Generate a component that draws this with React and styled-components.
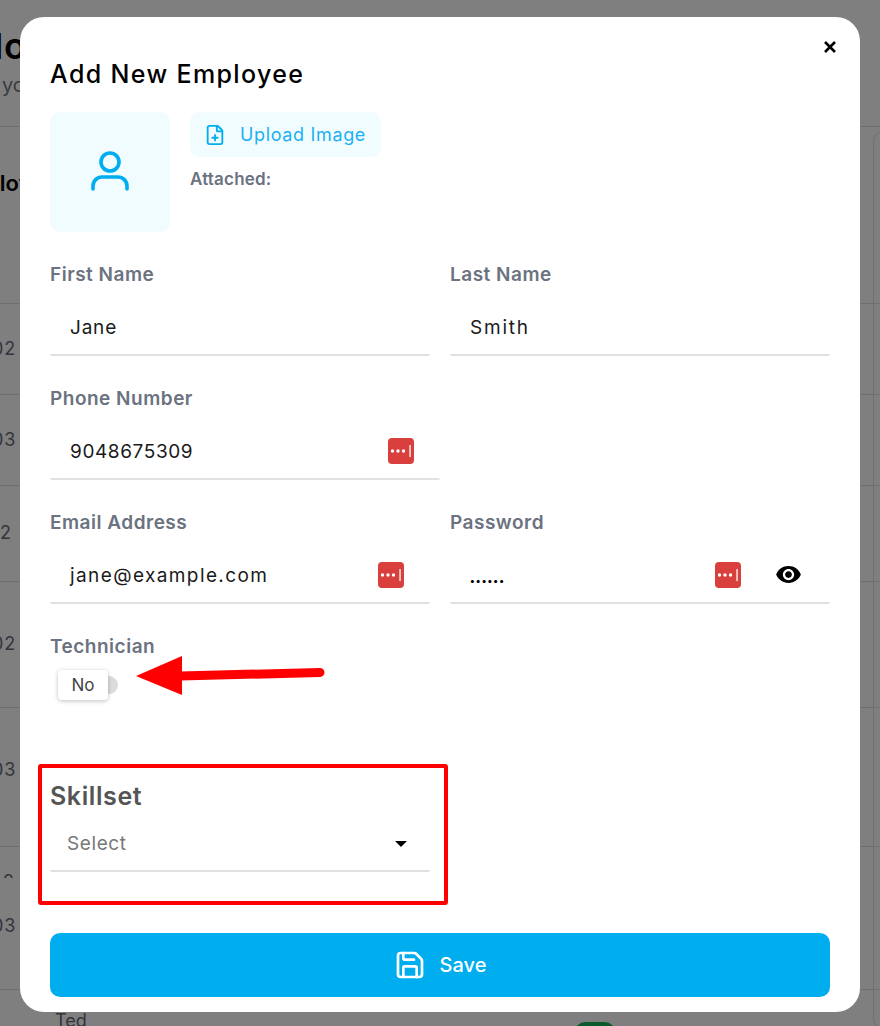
import React from "react";
import styled, { createGlobalStyle } from "styled-components";
import { MdVisibility } from "react-icons/md";
import { FilePlus, Save } from "lucide-react";

const Global = createGlobalStyle`
  html, body { margin: 0; padding: 0; background: #7f7f7f; }
  * { box-sizing: border-box; }
  body { font-family: Inter, "Liberation Sans", sans-serif; }
`;

const Backdrop = styled.div`
  position: fixed;
  inset: 0;
  background: #7f7f7f;
  overflow: hidden;
  color: #33343c;
`;
const PageHead = styled.header`
  height: 127px;
  margin-left: -86px;
  padding-top: 24px;
  border-bottom: 1px solid #6f6f6f;
`;
const PageTitle = styled.div`
  font-size: 36px;
  font-weight: 600;
  line-height: 44px;
  color: #000;
  letter-spacing: 1px;
`;
const PageSub = styled.div`
  font-size: 20px;
  line-height: 24px;
  margin-top: 5px;
  margin-left: 6px;
  color: #3a3b42;
`;
const SectionTitle = styled.div`
  height: 176px;
  padding-top: 42px;
  margin-left: -47px;
  font-size: 22px;
  font-weight: 600;
  line-height: 28px;
  color: #000;
`;
const Row = styled.div`
  height: ${(p) => p.$h}px;
  border-top: 1px solid #6f6f6f;
  padding-top: ${(p) => p.$top}px;
  padding-left: ${(p) => p.$left ?? 0}px;
  font-size: 18px;
  line-height: 24px;
  color: #33343c;
`;
const RowNum = styled.span`
  display: block;
  margin-left: ${(p) => p.$x ?? -8}px;
  letter-spacing: 1px;
`;
const RowClip = styled.div`
  height: 4px;
  overflow: hidden;
  margin-bottom: 36px;
  margin-left: 3px;
  & > span {
    display: block;
    margin-top: -4px;
  }
`;
const RightPanel = styled.div`
  position: absolute;
  left: 873px;
  top: 130px;
  width: 60px;
  height: 900px;
  border: 1px solid #6f6f6f;
  border-radius: 12px;
`;
const GreenBadge = styled.div`
  position: absolute;
  left: 575px;
  top: 1022px;
  width: 40px;
  height: 24px;
  border-radius: 10px;
  background: #0c5a2c;
`;

const Modal = styled.section`
  position: fixed;
  left: 20px;
  top: 17px;
  width: 840px;
  height: 995px;
  background: #fff;
  border-radius: 24px;
  padding: 40px 30px 0;
`;
const Close = styled.button`
  position: absolute;
  right: 22px;
  top: 22px;
  width: 16px;
  height: 16px;
  padding: 0;
  border: 0;
  background: none;
  display: block;
`;
const Title = styled.h2`
  margin: 0;
  height: 34px;
  font-size: 25px;
  font-weight: 500;
  line-height: 34px;
  letter-spacing: 1.35px;
  color: #000;
`;
const UploadRow = styled.div`
  display: flex;
  gap: 20px;
  margin-top: 21px;
  height: 120px;
`;
const Avatar = styled.div`
  width: 120px;
  height: 120px;
  background: #f1fcff;
  border-radius: 10px;
  display: flex;
  align-items: center;
  justify-content: center;
`;
const UploadCol = styled.div`
  display: flex;
  flex-direction: column;
  align-items: flex-start;
`;
const UploadBtn = styled.button`
  width: 191px;
  height: 45px;
  border: 0;
  border-radius: 10px;
  background: #f1fcff;
  color: #1eb0f0;
  display: flex;
  align-items: center;
  padding: 0 0 0 14px;
  gap: 14px;
  font: 400 18px Inter, sans-serif;
  letter-spacing: 0.65px;
`;
const Attached = styled.div`
  margin-top: 12px;
  font-size: 17px;
  line-height: 20px;
  font-weight: 600;
  letter-spacing: 0.2px;
  color: #6b7280;
`;
const Grid = styled.div`
  display: grid;
  grid-template-columns: 380px 380px;
  column-gap: 20px;
  margin-top: ${(p) => p.$mt}px;
`;
const Field = styled.div`
  height: 124px;
  width: ${(p) => p.$w ?? 380}px;
`;
const Label = styled.div`
  font-size: 19px;
  font-weight: 600;
  line-height: 24px;
  color: #6b7280;
  letter-spacing: 0.5px;
`;
const InputWrap = styled.div`
  position: relative;
  margin-top: 9px;
  height: 60px;
  border-bottom: 2px solid #e2e2e2;
  border-radius: 2px;
  padding: 0 0 14px 20px;
  display: flex;
  align-items: flex-end;
  font-size: 19px;
  line-height: 24px;
  color: #1a1a1a;
  letter-spacing: ${(p) => p.$ls ?? 0.8}px;
`;
const Dots = styled.span`
  font-size: 10px;
  letter-spacing: 1.1px;
  color: #000;
  font-weight: 700;
  line-height: 1;
  margin-bottom: 3px;
`;
const KeyIcon = styled.span`
  position: absolute;
  right: ${(p) => p.$r}px;
  top: 18px;
  width: 26px;
  height: 26px;
  display: block;
`;
const EyeIcon = styled(MdVisibility)`
  position: absolute;
  right: 28px;
  top: 17px;
  color: #000;
`;
const TechBlock = styled.div`
  height: 129px;
`;
const Toggle = styled.div`
  position: relative;
  margin: 11px 0 0 8px;
  width: 60px;
  height: 30px;
`;
const Track = styled.div`
  position: absolute;
  left: 40px;
  top: 6px;
  width: 20px;
  height: 18px;
  border-radius: 9px;
  background: #dcdcdc;
`;
const Knob = styled.div`
  position: absolute;
  left: 0;
  top: 0;
  width: 50px;
  height: 30px;
  background: #fff;
  border-radius: 4px;
  box-shadow: 0 1px 4px rgba(0,0,0,.25);
  display: flex;
  align-items: center;
  justify-content: center;
  font-size: 17px;
  color: #444;
`;
const Highlight = styled.div`
  margin-left: -12px;
  width: 410px;
  height: 141px;
  border: 4px solid #fe0000;
  border-radius: 3px;
  padding: 13px 14px 0 8px;
`;
const SkillTitle = styled.div`
  font-size: 25px;
  font-weight: 600;
  line-height: 30px;
  color: #555;
  letter-spacing: 0.6px;
`;
const SelectBox = styled.div`
  margin-top: 4px;
  height: 57px;
  border-bottom: 2px solid #e0e0e0;
  border-radius: 2px;
  padding: 0 23px 14px 17px;
  display: flex;
  align-items: flex-end;
  justify-content: space-between;
  font-size: 19px;
  line-height: 24px;
  color: #777;
  letter-spacing: 0.6px;
`;
const Caret = styled.span`
  width: 0;
  height: 0;
  margin-bottom: 9px;
  border-left: 6px solid transparent;
  border-right: 6px solid transparent;
  border-top: 6px solid #000;
`;
const SaveBtn = styled.button`
  margin-top: 28px;
  width: 780px;
  height: 64px;
  border: 0;
  border-radius: 10px;
  background: #00aeef;
  color: #fff;
  display: flex;
  align-items: center;
  justify-content: center;
  gap: 14px;
  font: 500 20px Inter, sans-serif;
`;
const Arrow = styled.svg`
  position: absolute;
  left: 116px;
  top: 639px;
`;

const LastPass = () => (
  <svg width="26" height="26" viewBox="0 0 26 26">
    <rect width="26" height="26" rx="4" fill="#d93f3c" />
    <circle cx="4.5" cy="13" r="1.7" fill="#fff" />
    <circle cx="10" cy="13" r="1.7" fill="#fff" />
    <circle cx="15.5" cy="13" r="1.7" fill="#fff" />
    <rect x="21.4" y="7" width="1.3" height="12" fill="#fff" />
  </svg>
);

export default function App() {
  return (
    <>
      <Global />
      <Backdrop>
        <PageHead>
          <PageTitle>Employees</PageTitle>
          <PageSub>Manage your</PageSub>
        </PageHead>
        <SectionTitle>Employees</SectionTitle>
        <Row $h={91} $top={33}><RowNum>02</RowNum></Row>
        <Row $h={91} $top={33}><RowNum>03</RowNum></Row>
        <Row $h={96} $top={35}><RowNum $x={0}>2</RowNum></Row>
        <Row $h={126} $top={50}><RowNum>02</RowNum></Row>
        <Row $h={139} $top={50}><RowNum>03</RowNum></Row>
        <Row $h={143} $top={27}>
          <RowClip><span>2</span></RowClip>
          <RowNum>03</RowNum>
        </Row>
        <Row $h={40} $top={19} $left={55}>Ted</Row>
        <RightPanel />
        <GreenBadge />
      </Backdrop>

      <Modal>
        <Close aria-label="Close">
          <svg width="16" height="16" viewBox="0 0 16 16">
            <path d="M3 3l10 10M13 3L3 13" stroke="#000" strokeWidth="2.6" />
          </svg>
        </Close>
        <Title>Add New Employee</Title>
        <UploadRow>
          <Avatar>
            <svg width="40" height="44" viewBox="0 0 40 44" fill="none" stroke="#00aeef" strokeWidth="3.6" strokeLinecap="round">
              <circle cx="20" cy="12" r="9" />
              <path d="M3 39v-3a9 9 0 0 1 9-9h16a9 9 0 0 1 9 9v3" />
            </svg>
          </Avatar>
          <UploadCol>
            <UploadBtn>
              <FilePlus size={22} strokeWidth={2} color="#00aeef" />
              Upload Image
            </UploadBtn>
            <Attached>Attached:</Attached>
          </UploadCol>
        </UploadRow>

        <Grid $mt={31}>
          <Field>
            <Label>First Name</Label>
            <InputWrap $ls={0.8}>Jane</InputWrap>
          </Field>
          <Field>
            <Label>Last Name</Label>
            <InputWrap $ls={1.8}>Smith</InputWrap>
          </Field>
          <Field $w={390}>
            <Label>Phone Number</Label>
            <InputWrap $ls={0.6}>
              9048675309
              <KeyIcon $r={26}><LastPass /></KeyIcon>
            </InputWrap>
          </Field>
          <div />
          <Field>
            <Label>Email Address</Label>
            <InputWrap $ls={1.4}>
              jane@example.com
              <KeyIcon $r={26}><LastPass /></KeyIcon>
            </InputWrap>
          </Field>
          <Field>
            <Label>Password</Label>
            <InputWrap>
              <Dots>••••••</Dots>
              <KeyIcon $r={89}><LastPass /></KeyIcon>
              <EyeIcon size={27} />
            </InputWrap>
          </Field>
        </Grid>

        <TechBlock>
          <Label>Technician</Label>
          <Toggle>
            <Track />
            <Knob>No</Knob>
          </Toggle>
        </TechBlock>

        <Highlight>
          <SkillTitle>Skillset</SkillTitle>
          <SelectBox>
            Select
            <Caret />
          </SelectBox>
        </Highlight>

        <SaveBtn>
          <Save size={32} strokeWidth={2} />
          Save
        </SaveBtn>

        <Arrow width="215" height="60" viewBox="0 0 215 60">
          <path d="M44 20L184 16.5" stroke="#fe0000" strokeWidth="9" strokeLinecap="round" fill="none" />
          <path d="M0 20L46 0V39Z" fill="#fe0000" />
        </Arrow>
      </Modal>
    </>
  );
}
